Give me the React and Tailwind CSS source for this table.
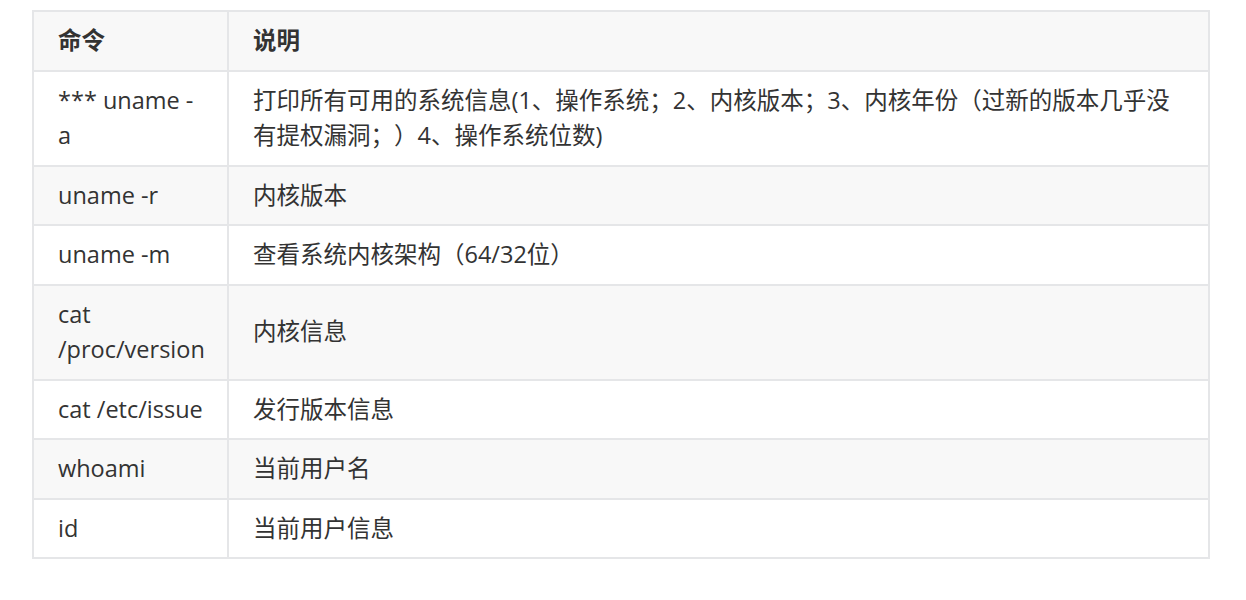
export default function App() {
  const rows = [
    ["*** uname -a", "打印所有可用的系统信息(1、操作系统；2、内核版本；3、内核年份（过新的版本几乎没有提权漏洞；）4、操作系统位数)"],
    ["uname -r", "内核版本"],
    ["uname -m", "查看系统内核架构（64/32位）"],
    ["cat /proc/version", "内核信息"],
    ["cat /etc/issue", "发行版本信息"],
    ["whoami", "当前用户名"],
    ["id", "当前用户信息"],
  ];
  const font = { fontFamily: '"Open Sans", "Noto Sans CJK SC", sans-serif' };
  return (
    <div className="bg-white w-[1246px] h-[600px] pt-[10px] pl-[32px]" style={font}>
      <table className="table-fixed border-collapse w-[1178px] text-[23.5px] leading-[35.5px] text-[#333] [text-spacing-trim:space-all]">
        <colgroup>
          <col className="w-[195px]" />
          <col />
        </colgroup>
        <thead>
          <tr className="bg-[#f8f8f8]">
            <th className="border-2 border-[#e5e6e8] px-[24px] py-[11px] text-left font-bold">命令</th>
            <th className="border-2 border-[#e5e6e8] px-[24px] py-[11px] text-left font-bold">说明</th>
          </tr>
        </thead>
        <tbody>
          {rows.map((r, i) => (
            <tr key={i} className={i % 2 === 1 ? "bg-[#f8f8f8]" : "bg-white"}>
              <td className="border-2 border-[#e5e6e8] px-[24px] py-[11px] align-middle">{r[0]}</td>
              <td className="border-2 border-[#e5e6e8] px-[24px] py-[11px] align-middle">{r[1]}</td>
            </tr>
          ))}
        </tbody>
      </table>
    </div>
  );
}
